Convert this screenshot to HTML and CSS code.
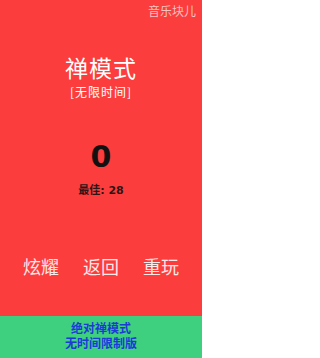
FILE: index.html
```html
<!DOCTYPE html>
<html lang="zh">
<head>
<meta charset="utf-8">
<link rel="stylesheet" href="styles.css">
</head>
<body>
<div class="screen">
  <main class="main">
    <div class="brand">音乐块儿</div>
    <h1 class="title">禅模式</h1>
    <div class="subtitle">[无限时间]</div>
    <div class="score">0</div>
    <div class="best">最佳: 28</div>
    <nav class="actions">
      <span class="action">炫耀</span>
      <span class="action">返回</span>
      <span class="action">重玩</span>
    </nav>
  </main>
  <footer class="footer">
    <div>绝对禅模式</div>
    <div>无时间限制版</div>
  </footer>
</div>
</body>
</html>
```
FILE: styles.css
```css
html, body {
  margin: 0;
  padding: 0;
}
body {
  width: 202px;
  height: 358px;
  overflow: hidden;
  font-family: "Noto Sans CJK SC", "Noto Sans", sans-serif;
}
.screen {
  display: flex;
  flex-direction: column;
  height: 358px;
}
.main {
  flex: 1;
  background: #fc3d3d;
  display: flex;
  flex-direction: column;
  align-items: center;
}
.brand {
  align-self: flex-end;
  margin: 4px 6px 0 0;
  font-size: 12px;
  line-height: 14px;
  color: #f7c2c2;
}
.title {
  margin: 34px 0 0;
  font-size: 23px;
  line-height: 30px;
  letter-spacing: 1px;
  font-weight: 400;
  color: #ffffff;
}
.subtitle {
  margin-top: 3px;
  font-size: 12px;
  line-height: 14px;
  letter-spacing: 1px;
  color: #ffffff;
}
.score {
  margin-top: 40px;
  font-family: "DejaVu Sans", sans-serif;
  font-weight: 700;
  font-size: 30px;
  line-height: 36px;
  color: #111111;
}
.best {
  margin-top: 9px;
  font-family: "DejaVu Sans", "Noto Sans CJK SC", sans-serif;
  font-weight: 700;
  font-size: 11px;
  line-height: 14px;
  color: #2e1515;
}
.actions {
  margin-top: 57px;
  display: flex;
  gap: 24px;
  font-size: 18px;
  line-height: 22px;
  color: #fbe8e8;
}
.footer {
  height: 42px;
  box-sizing: border-box;
  padding-top: 6px;
  background: #3ecf7f;
  color: #1c3bd6;
  font-family: "Liberation Sans", "Noto Sans CJK SC", sans-serif;
  font-weight: 700;
  font-size: 12px;
  line-height: 15px;
  text-align: center;
}
```
